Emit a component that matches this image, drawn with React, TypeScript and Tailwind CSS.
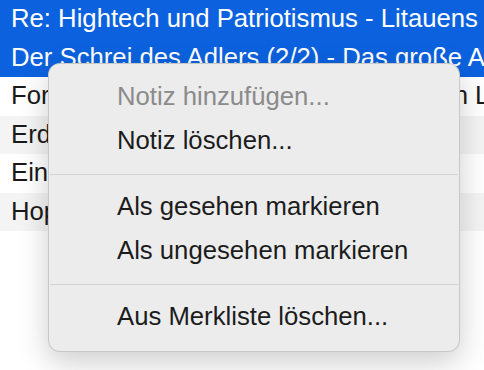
import React from 'react';

const rows = [
  { title: 'Re: Hightech und Patriotismus - Litauens Weg in die Zukunft', selected: true },
  { title: 'Der Schrei des Adlers (2/2) - Das große Abenteuer', selected: true },
  { title: 'Forschung und Reisen - Expeditionen in Lappland', selected: false },
  { title: 'Erdbeben - Die Kraft der Natur', selected: false },
  { title: 'Eine Reise durch die Alpen', selected: false },
  { title: 'Hoppla, wir leben!', selected: false },
];

const MenuItem = ({ label, disabled }: { label: string; disabled?: boolean }) => (
  <div className={`h-[44px] flex items-center pl-[68px] ${disabled ? 'text-[#8b8b8b]' : 'text-[#1c1c1c]'}`}>
    {label}
  </div>
);

const Separator = () => (
  <div className="h-[22px] flex items-center px-[1px]">
    <div className="h-px w-full bg-[#d3d3d3]" />
  </div>
);

export default function App() {
  return (
    <div
      className="relative w-[484px] h-[370px] overflow-hidden bg-white text-[25.7px] leading-none"
      style={{ fontFamily: '"Liberation Sans", Arial, sans-serif' }}
    >
      <div className="flex flex-col">
        {rows.map((row, i) => (
          <div
            key={i}
            className={`h-[38.5px] flex items-center pl-[11px] whitespace-nowrap overflow-hidden ${
              row.selected ? 'bg-[#0c62de] text-white' : i % 2 === 1 ? 'bg-[#f4f4f4] text-[#1a1a1a]' : 'bg-white text-[#1a1a1a]'
            }`}
          >
            {row.title}
          </div>
        ))}
      </div>

      {/* context menu */}
      <div className="absolute left-[48px] top-[63px] w-[412px] h-[289px] rounded-[12px] bg-[#ececec] border border-black/15 shadow-[0_10px_30px_rgba(0,0,0,0.2)] pt-[11px] flex flex-col">
        <MenuItem label="Notiz hinzufügen..." disabled />
        <MenuItem label="Notiz löschen..." />
        <Separator />
        <MenuItem label="Als gesehen markieren" />
        <MenuItem label="Als ungesehen markieren" />
        <Separator />
        <MenuItem label="Aus Merkliste löschen..." />
      </div>
    </div>
  );
}
